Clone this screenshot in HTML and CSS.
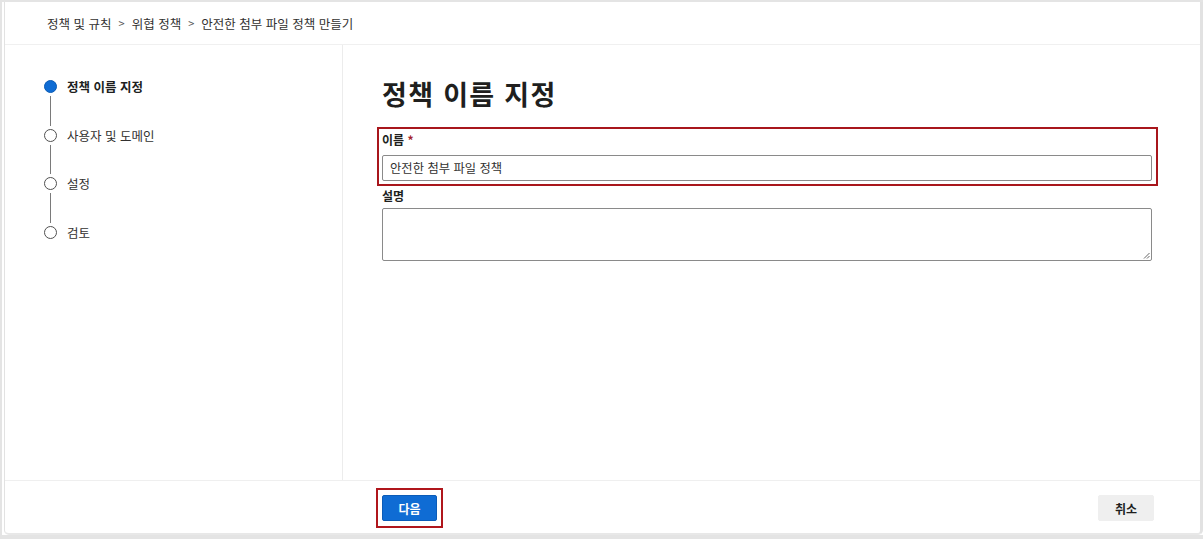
FILE: index.html
```html
<!DOCTYPE html>
<html lang="ko">
<head>
<meta charset="utf-8">
<title>정책 이름 지정</title>
<link rel="stylesheet" href="styles.css">
</head>
<body>
<div class="page">
  <div class="window">
    <header class="header">
      <nav class="crumbs">
        <span>정책 및 규칙</span><span class="sep">&gt;</span><span>위협 정책</span><span class="sep">&gt;</span><span>안전한 첨부 파일 정책 만들기</span>
      </nav>
    </header>
    <main class="main">
      <aside class="steps">
        <div class="step current">
          <div class="rail"><span class="dot"></span><span class="line"></span></div>
          <span class="step-label">정책 이름 지정</span>
        </div>
        <div class="step">
          <div class="rail"><span class="dot"></span><span class="line"></span></div>
          <span class="step-label">사용자 및 도메인</span>
        </div>
        <div class="step">
          <div class="rail"><span class="dot"></span><span class="line"></span></div>
          <span class="step-label">설정</span>
        </div>
        <div class="step last">
          <div class="rail"><span class="dot"></span></div>
          <span class="step-label">검토</span>
        </div>
      </aside>
      <section class="content">
        <h1 class="title">정책 이름 지정</h1>
        <div class="highlight">
          <label class="label">이름 <span class="req">*</span></label>
          <div class="input">안전한 첨부 파일 정책</div>
        </div>
        <label class="label label-desc">설명</label>
        <div class="textarea">
          <svg class="grip" width="7" height="7" viewBox="0 0 7 7"><path d="M6.5 1 L1 6.5 M6.5 4 L4 6.5" stroke="#666" stroke-width="1" fill="none"/></svg>
        </div>
      </section>
    </main>
    <footer class="footer">
      <div class="next-wrap"><button class="btn primary">다음</button></div>
      <button class="btn secondary">취소</button>
    </footer>
  </div>
</div>
</body>
</html>
```

FILE: styles.css
```css
* { box-sizing: border-box; }
html, body { margin: 0; padding: 0; }
body {
  background: #fff;
  font-family: "Noto Sans CJK KR", "Noto Sans", sans-serif;
  color: #323130;
}
.page {
  width: 1203px;
  height: 539px;
  border-top: 2px solid #e4e4e4;
  border-left: 2px solid #e4e4e4;
  border-bottom: 4px solid #e4e4e4;
  padding-left: 2px;
  background: #fff;
}
.window {
  height: 100%;
  display: flex;
  flex-direction: column;
  border-left: 1px solid #e2e2e2;
  border-right: 3px solid #e2e2e2;
  border-bottom: 2px solid #e8e8e8;
  border-bottom-left-radius: 5px;
  border-bottom-right-radius: 5px;
}
.header {
  height: 43px;
  flex: none;
  border-bottom: 1px solid #f0f0f0;
  display: flex;
  align-items: center;
  padding-left: 42px;
  font-size: 12.5px;
  color: #323130;
}
.crumbs { display: flex; align-items: center; }
.sep { margin: 0 7px; color: #555; font-size: 11px; }
.main {
  height: 436px;
  flex: none;
  display: flex;
  border-bottom: 1px solid #efefef;
}
.steps {
  width: 338px;
  flex: none;
  border-right: 1px solid #ececec;
  padding: 35px 0 0 39px;
}
.step {
  display: flex;
  height: 48.7px;
}
.step.last { height: 14px; }
.rail {
  width: 13px;
  display: flex;
  flex-direction: column;
  align-items: center;
}
.dot {
  width: 13px;
  height: 13px;
  border-radius: 50%;
  border: 1.7px solid #505050;
  background: #fff;
  flex: none;
}
.current .dot { background: #0f6cd4; border-color: #0a5bb5; }
.line {
  width: 1px;
  flex: 1;
  background: #7a7a7a;
  margin: 3px 0 3px;
}
.step-label {
  margin-left: 10px;
  font-size: 12.5px;
  line-height: 13px;
  color: #323130;
}
.current .step-label { font-weight: 700; color: #201f1e; }
.content {
  flex: 1;
  padding: 33px 0 0 39px;
}
.title {
  margin: 0 0 18px;
  font-size: 27px;
  letter-spacing: 1.3px;
  line-height: 31px;
  font-weight: 700;
  color: #201f1e;
}
.highlight {
  width: 781px;
  margin-left: -5px;
  border: 2px solid #a8161c;
  padding: 3px 5px 3px 3px;
}
.label {
  display: block;
  font-size: 12px;
  line-height: 16px;
  font-weight: 700;
  color: #201f1e;
}
.req { color: #a4262c; }
.input {
  margin-top: 7px;
  width: 770px;
  height: 26px;
  border: 1px solid #8a8a8a;
  border-radius: 2px;
  padding: 0 7px;
  font-size: 12.3px;
  line-height: 24px;
  color: #323130;
}
.label-desc { margin-top: 2px; }
.textarea {
  position: relative;
  margin-top: 4px;
  width: 770px;
  height: 53px;
  border: 1px solid #8a8a8a;
  border-radius: 2px;
}
.grip { position: absolute; right: 1px; bottom: 1px; }
.footer {
  flex: 1;
  display: flex;
  align-items: center;
  justify-content: space-between;
  padding: 0 46px 0 371px;
}
.next-wrap {
  border: 2px solid #b0161c;
  padding: 5px 4px;
  margin-top: 2px;
}
.btn {
  font-family: "Noto Sans CJK KR", "Noto Sans", sans-serif;
  font-size: 12px;
  font-weight: 700;
  height: 26px;
  border-radius: 2px;
  display: block;
}
.primary {
  width: 55px;
  background: #0f6cd4;
  border: 1px solid #0b5cb8;
  color: #fff;
}
.secondary {
  width: 56px;
  background: #efefef;
  border: 1px solid #efefef;
  color: #201f1e;
  margin-top: 2px;
}
```
